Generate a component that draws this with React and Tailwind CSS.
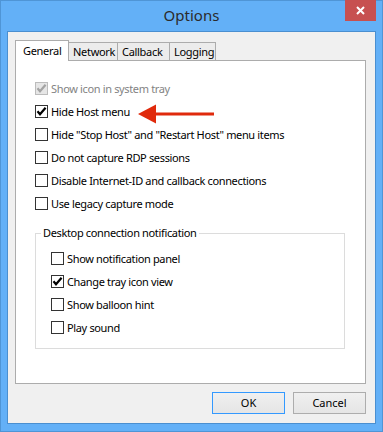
import React from 'react';

const font = { fontFamily: '"Noto Sans", "Segoe UI", sans-serif' };

function Check({ checked, disabled }) {
  return (
    <span
      className={`relative flex w-[13px] h-[13px] shrink-0 items-center justify-center border ${
        disabled ? 'border-[#bcbcbc] bg-[#e6e6e6]' : 'border-[#333333] bg-white'
      }`}
    >
      {checked && (
        <svg width="11" height="11" viewBox="0 0 11 11" className="block">
          <path
            d="M1.5 5.3 L4 8.3 L9.6 1.8"
            fill="none"
            stroke={disabled ? '#a3a3a3' : '#000'}
            strokeWidth="2.2"
          />
        </svg>
      )}
    </span>
  );
}

function Row({ label, checked, disabled }) {
  return (
    <div className="flex h-[23px] items-center gap-[3px]">
      <Check checked={checked} disabled={disabled} />
      <span
        className={`text-[11px] leading-none tracking-[-0.35px] ${disabled ? 'text-[#838383]' : 'text-black'}`}
      >
        {label}
      </span>
    </div>
  );
}

export default function App() {
  const tabs = [
    { name: 'General', w: 'w-[54px]' },
    { name: 'Network', w: 'w-[50px]' },
    { name: 'Callback', w: 'w-[53px]' },
    { name: 'Logging', w: 'w-[47px]' },
  ];

  return (
    <div className="relative w-[383px] h-[432px] bg-[#63b0f7] border border-[#4f95d6] flex flex-col" style={font}>
      {/* title bar */}
      <div className="relative h-[30px] flex items-center justify-center shrink-0">
        <span className="text-[15px] text-[#2b2b2b] -mt-[1px]">Options</span>
        <div className="absolute right-[6px] top-[-1px] w-[31px] h-[21px] bg-[#c75050] flex items-center justify-center">
          <svg width="9" height="9" viewBox="0 0 9 9">
            <path d="M1 1 L8 8 M8 1 L1 8" stroke="#fff" strokeWidth="2" />
          </svg>
        </div>
      </div>

      {/* client area */}
      <div className="mx-[6px] mb-[7px] flex-1 bg-[#f0f0f0] border border-[#4a8fd0] pt-[8px] pl-[7px] pr-[9px] flex flex-col">
        <div className="flex items-end h-[21px] -mb-px relative z-10">
          {tabs.map((t, i) =>
            i === 0 ? (
              <div
                key={t.name}
                className={`${t.w} h-[21px] bg-white border border-b-0 border-[#acacac] flex items-start pt-[3px] pl-[7px] text-[11px] leading-[14px] tracking-[-0.3px] text-black`}
              >
                {t.name}
              </div>
            ) : (
              <div
                key={t.name}
                className={`${t.w} h-[19px] -ml-px bg-[#ececec] border border-[#acacac] flex items-center pl-[4px] text-[11px] leading-none tracking-[-0.3px] text-black`}
              >
                {t.name}
              </div>
            )
          )}
        </div>

        <div className="h-[324px] bg-white border border-[#acacac] pt-[16px] pl-[19px]">
          <Row label="Show icon in system tray" checked disabled />
          <Row label="Hide Host menu" checked />
          <Row label={'Hide "Stop Host" and "Restart Host" menu items'} />
          <Row label="Do not capture RDP sessions" />
          <Row label="Disable Internet-ID and callback connections" />
          <Row label="Use legacy capture mode" />

          <fieldset className="mt-[10px] w-[310px] border border-[#dcdcdc] pb-[9px]">
            <legend className="ml-[5px] px-[2px] text-[11px] leading-[16px] tracking-[-0.35px] text-black">
              Desktop connection notification
            </legend>
            <div className="pt-[6px] pl-[15px]">
              <Row label="Show notification panel" />
              <Row label="Change tray icon view" checked />
              <Row label="Show balloon hint" />
              <Row label="Play sound" />
            </div>
          </fieldset>
        </div>

        <div className="flex justify-end gap-[8px] mt-[8px]">
          <button className="w-[73px] h-[22px] border border-[#3399ff] bg-gradient-to-b from-[#f0f0f0] to-[#e5e5e5] text-[11px] text-black">
            OK
          </button>
          <button className="w-[73px] h-[22px] border border-[#adadad] bg-gradient-to-b from-[#f0f0f0] to-[#e5e5e5] text-[11px] text-black">
            Cancel
          </button>
        </div>
      </div>

      {/* annotation arrow */}
      <svg className="absolute left-[136px] top-[102px]" width="80" height="22" viewBox="0 0 80 22">
        <path d="M1 11 L19 1.5 L19 20.5 Z" fill="#e02a0c" />
        <rect x="18" y="9.5" width="59" height="3" fill="#e02a0c" />
      </svg>
    </div>
  );
}
